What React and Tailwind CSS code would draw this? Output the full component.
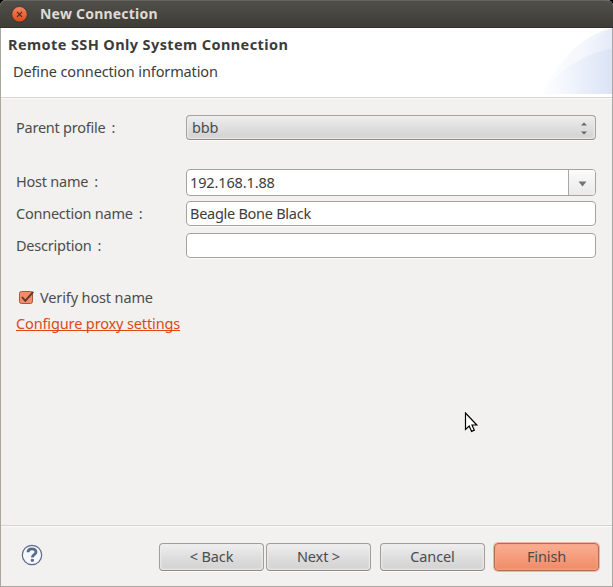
import { useState } from 'react'

const inputClass = 'w-full h-[25px] bg-white border border-[#a6a39f] rounded-[4px] px-[3px] pb-[2px] text-[14.5px] tracking-[-0.27px] text-[#3c3c3c] outline-none shadow-[0_1px_0_#fafafa]'

function Label({ children }) {
  return (
    <span className="block w-[170px] shrink-0 pb-[2px] tracking-[-0.24px] whitespace-nowrap">
      {children}<span className="ml-[6px]">:</span>
    </span>
  )
}

function Button({ children, primary, className }) {
  return (
    <button
      className={`w-[105px] h-[28px] pb-[2px] rounded-[4px] border text-center whitespace-nowrap ${primary
        ? 'border-[#b06c55] bg-linear-to-b from-[#fbae93] to-[#ee8b65] shadow-[0_0_0_1px_#f5b49d,inset_0_0_2px_1px_#f9a385]'
        : 'border-[#a09e9b] border-b-[#8d8b89] bg-linear-to-b from-[#f0f0f0] via-[#dedede] via-50% to-[#d2d2d2] shadow-[0_1px_0_#fafafa,inset_0_0_2px_1px_#ededed]'
      } ${className}`}
    >
      {children}
    </button>
  )
}

export default function App() {
  const [host, setHost] = useState('192.168.1.88')
  const [name, setName] = useState('Beagle Bone Black')
  const [description, setDescription] = useState('')

  return (
    <div className="relative w-[613px] h-[587px] overflow-hidden bg-black">
      <div className="flex flex-col w-full h-full overflow-hidden rounded-t-[6px] bg-[#f2f1f0] font-['Noto_Sans','Open_Sans',sans-serif] text-[14.5px] leading-[20px] tracking-[-0.13px] text-[#4c4c4c]">
        {/* Title bar */}
        <div className="flex items-center h-[28px] shrink-0 pl-[11px] border-t border-b border-t-[#65645e] border-b-[#32312d] bg-linear-to-b from-[#504f49] to-[#3d3c37]">
          <svg width="18" height="18" viewBox="0 0 18 18" className="shrink-0">
            <defs>
              <linearGradient id="close" x1="0" y1="0" x2="0" y2="1">
                <stop offset="0" stopColor="#f58763" />
                <stop offset="1" stopColor="#df4816" />
              </linearGradient>
            </defs>
            <circle cx="8.5" cy="9.3" r="7.8" fill="url(#close)" stroke="#33302b" strokeWidth="0.8" />
            <path d="M6 6.8l5 5M11 6.8l-5 5" stroke="#48261b" strokeWidth="1.1" />
          </svg>
          <span className="ml-[11px] font-bold text-[14px] tracking-[0.22px] text-[#dfdbd2]">New Connection</span>
        </div>

        <div className="flex flex-col flex-1 border-x border-b border-[#aaa6a0]">
          {/* Banner */}
          <div className="flex justify-between h-[70px] shrink-0 bg-white border-b border-[#d5d4d3] shadow-[0_1px_0_#fafafa]">
            <div className="pt-[6px]">
              <h1 className="pl-[7px] font-bold text-[14.5px] tracking-[0.4px] text-[#3c3c3c] whitespace-nowrap">Remote SSH Only System Connection</h1>
              <p className="mt-[7px] pl-[12px] text-[#3c3c3c] whitespace-nowrap">Define connection information</p>
            </div>
            <svg width="72" height="66" viewBox="0 0 72 66" className="shrink-0">
              <defs>
                <linearGradient id="arcBack">
                  <stop offset="0" stopColor="#fff" />
                  <stop offset="1" stopColor="#e4eaf8" />
                </linearGradient>
                <linearGradient id="arcFront">
                  <stop offset="0" stopColor="#fff" />
                  <stop offset="0.5" stopColor="#edf2fb" />
                  <stop offset="1" stopColor="#dbe3f6" />
                </linearGradient>
              </defs>
              <path d="M0 66C17 35 43 6 72 0V66Z" fill="url(#arcBack)" opacity="0.7" />
              <path d="M24 66C31 38 47 11 72 0V66Z" fill="url(#arcBack)" />
              <path d="M0 66C17 44 45 24 72 21V66Z" fill="url(#arcFront)" />
            </svg>
          </div>

          {/* Form */}
          <div className="flex flex-col flex-1 pl-[15px] pr-[16px] pt-[17px]">
            <div className="flex items-center h-[25px]">
              <Label>Parent profile</Label>
              <div className="flex items-center justify-between flex-1 h-[25px] pl-[5px] pr-[7px] rounded-[4px] border border-[#a5a3a1] border-b-[#8e8c8a] bg-linear-to-b from-[#eeeeee] via-[#dfdfdf] via-50% to-[#d1d1d1] shadow-[0_1px_0_#fafafa,inset_0_0_2px_1px_#ececec]">
                <span className="pb-[1px]">bbb</span>
                <svg width="8" height="14" viewBox="0 0 8 14" className="mt-[1px]">
                  <path d="M1 4.5L4 1.5L7 4.5ZM1 10.5L4 13.5L7 10.5Z" fill="#666" />
                </svg>
              </div>
            </div>

            <div className="flex items-center h-[27px] mt-[29px]">
              <div className="pb-[2px]"><Label>Host name</Label></div>
              <div className="flex flex-1 h-[27px] overflow-hidden rounded-[4px] border border-[#a6a39f] bg-white">
                <input value={host} onChange={(e) => setHost(e.target.value)} className="flex-1 min-w-0 px-[3px] pb-[1px] text-[#3c3c3c] outline-none" />
                <button className="flex items-center justify-center w-[27px] border-l border-[#aaa7a4] bg-linear-to-b from-[#fbfbfb] to-[#eaeaea]">
                  <svg width="9" height="6" viewBox="0 0 9 6" className="mt-[2px]">
                    <path d="M0.5 0.5H8.5L4.5 5.5Z" fill="#747474" />
                  </svg>
                </button>
              </div>
            </div>

            <div className="flex items-center h-[25px] mt-[5px]">
              <Label>Connection name</Label>
              <input value={name} onChange={(e) => setName(e.target.value)} className={inputClass} />
            </div>

            <div className="flex items-center h-[25px] mt-[7px]">
              <Label>Description</Label>
              <input value={description} onChange={(e) => setDescription(e.target.value)} className={inputClass} />
            </div>

            <div className="flex items-center h-[20px] mt-[29px] pl-[2px]">
              <svg width="18" height="18" viewBox="0 0 18 18" className="mt-[2px]">
                <rect x="1.5" y="2.5" width="13" height="12" rx="2" fill="#f28c68" stroke="#a8583f" />
                <path d="M4 8L7.3 11.8L15.2 2.8" fill="none" stroke="#5a382b" strokeWidth="1.9" />
              </svg>
              <span className="ml-[4px]">Verify host name</span>
            </div>
            <a className="self-start mt-[6px] h-[18px] leading-[20px] border-b border-[#dd4814] text-[#dd4814] whitespace-nowrap">Configure proxy settings</a>
          </div>

          {/* Button bar */}
          <div className="flex h-[61px] shrink-0 pl-[20px] pr-[13px] pt-[17px] border-t border-[#d5d4d3] shadow-[inset_0_1px_0_#fafafa]">
            <svg width="22" height="22" viewBox="0 0 22 22" className="mt-[1px]">
              <circle cx="11" cy="11" r="9.7" fill="#f6f7fa" stroke="#596b8c" strokeWidth="1.2" />
              <path d="M7 8.2C7 3.8 15 3.9 15 8C15 10.8 11.3 10.7 11.3 13.6" fill="none" stroke="#596b8c" strokeWidth="2.8" />
              <rect x="9.8" y="14.9" width="3.1" height="2.9" rx="0.8" fill="#596b8c" />
            </svg>
            <div className="flex flex-1 justify-end">
              <Button>&lt; Back</Button>
              <Button className="ml-[2px]">Next &gt;</Button>
              <Button className="ml-[9px]">Cancel</Button>
              <Button primary className="ml-[9px]">Finish</Button>
            </div>
          </div>
        </div>
      </div>

      {/* Mouse pointer */}
      <svg width="16" height="22" viewBox="0 0 16 22" className="absolute left-[464px] top-[412px]">
        <path d="M1.5 1V17.5L5.2 14.1L7.6 19.4L10.3 18.1L8 13H12.8Z" fill="#fff" stroke="#000" strokeWidth="1.2" />
      </svg>
    </div>
  )
}
